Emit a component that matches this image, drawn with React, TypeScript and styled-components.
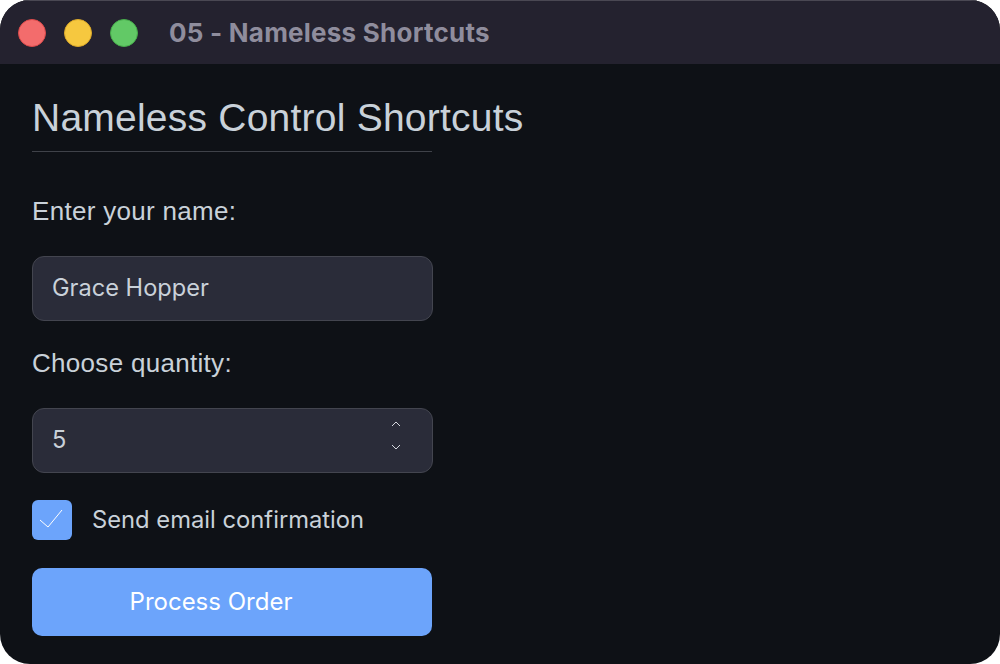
import React from 'react';
import styled, { createGlobalStyle } from 'styled-components';

const GlobalStyle = createGlobalStyle`
  html, body {
    margin: 0;
    padding: 0;
    background-color: #fff;
  }
  * {
    box-sizing: border-box;
  }
`;

const Window = styled.div`
  width: 1000px;
  height: 664px;
  display: flex;
  flex-direction: column;
  border-radius: 30px;
  overflow: hidden;
  background-color: #0e1116;
`;

const TitleBar = styled.div`
  height: 64px;
  flex-shrink: 0;
  display: flex;
  align-items: center;
  padding-left: 18px;
  background-color: #24222f;
  border-top: 1px solid #4a4853;
`;

const Lights = styled.div`
  display: flex;
  gap: 18px;
  margin-right: 31px;
`;

const Light = styled.span<{ $fill: string; $edge: string }>`
  width: 28px;
  height: 28px;
  border-radius: 50%;
  background-color: ${(p) => p.$fill};
  border: 1px solid ${(p) => p.$edge};
`;

const WindowTitle = styled.div`
  font-family: Inter, sans-serif;
  font-size: 26px;
  font-weight: 700;
  letter-spacing: 0.23px;
  color: #8f8d9d;
`;

const Content = styled.div`
  display: flex;
  flex-direction: column;
  width: 465px;
  padding: 0 32px;
`;

const Heading = styled.h1`
  margin: 28px 0 0;
  width: 400px;
  height: 60px;
  border-bottom: 1px solid #3f4249;
  font-family: 'Liberation Sans', Arial, sans-serif;
  font-size: 39px;
  line-height: 52px;
  font-weight: 400;
  letter-spacing: 0.23px;
  color: #c9d1d9;
  white-space: nowrap;
`;

const Label = styled.label<{ $top: number }>`
  display: block;
  margin-top: ${(p) => p.$top}px;
  height: 30px;
  font-family: 'Liberation Sans', Arial, sans-serif;
  font-size: 26px;
  line-height: 30px;
  letter-spacing: 0.3px;
  color: #c9d1d9;
`;

const Field = styled.div`
  margin-top: 30px;
  height: 65px;
  display: flex;
  align-items: center;
  justify-content: space-between;
  padding: 0 20px 2px 19px;
  background-color: #2a2c39;
  border: 1px solid #43454f;
  border-radius: 12px;
`;

const FieldInput = styled.input`
  flex: 1;
  min-width: 0;
  padding: 0;
  border: none;
  outline: none;
  background: transparent;
  font-family: Inter, sans-serif;
  font-size: 23.6px;
  color: #c9d1d9;
`;

const Spinner = styled.div`
  display: flex;
  flex-direction: column;
  gap: 17px;
  margin: 0 11px 8px 0;
`;

const CheckRow = styled.div`
  margin-top: 27px;
  display: flex;
  align-items: center;
  gap: 20px;
`;

const CheckBox = styled.div`
  width: 40px;
  height: 40px;
  display: flex;
  align-items: center;
  justify-content: center;
  background-color: #6ca4fb;
  border-radius: 6px;
`;

const CheckLabel = styled.span`
  padding-bottom: 2px;
  font-family: Inter, sans-serif;
  font-size: 23.75px;
  color: #c9d1d9;
`;

const SubmitButton = styled.button`
  margin-top: 28px;
  width: 400px;
  height: 68px;
  padding: 0 42px 2px 0;
  border: none;
  border-radius: 10px;
  background-color: #6ca4fb;
  font-family: Inter, sans-serif;
  font-size: 24px;
  color: #fff;
`;

const Chevron: React.FC<{ up?: boolean }> = ({ up }) => (
  <svg width="10" height="6" viewBox="0 0 10 6" fill="none" stroke="#d5d8df" strokeWidth="1">
    <path d={up ? 'M1 5 L5 1 L9 5' : 'M1 1 L5 5 L9 1'} />
  </svg>
);

const App: React.FC = () => {
  return (
    <Window>
      <GlobalStyle />
      <TitleBar>
        <Lights>
          <Light $fill="#f36c6c" $edge="#dd4b4b" />
          <Light $fill="#f6c83f" $edge="#dca92a" />
          <Light $fill="#62c966" $edge="#47ad4b" />
        </Lights>
        <WindowTitle>05 - Nameless Shortcuts</WindowTitle>
      </TitleBar>
      <Content>
        <Heading>Nameless Control Shortcuts</Heading>
        <Label $top={44}>Enter your name:</Label>
        <Field>
          <FieldInput defaultValue="Grace Hopper" />
        </Field>
        <Label $top={27}>Choose quantity:</Label>
        <Field>
          <FieldInput defaultValue="5" />
          <Spinner>
            <Chevron up />
            <Chevron />
          </Spinner>
        </Field>
        <CheckRow>
          <CheckBox>
            <svg width="26" height="24" viewBox="0 0 26 24" fill="none" stroke="#fff" strokeWidth="1">
              <path d="M1 12 L9 19 L23 2" />
            </svg>
          </CheckBox>
          <CheckLabel>Send email confirmation</CheckLabel>
        </CheckRow>
        <SubmitButton>Process Order</SubmitButton>
      </Content>
    </Window>
  );
};

export default App;
